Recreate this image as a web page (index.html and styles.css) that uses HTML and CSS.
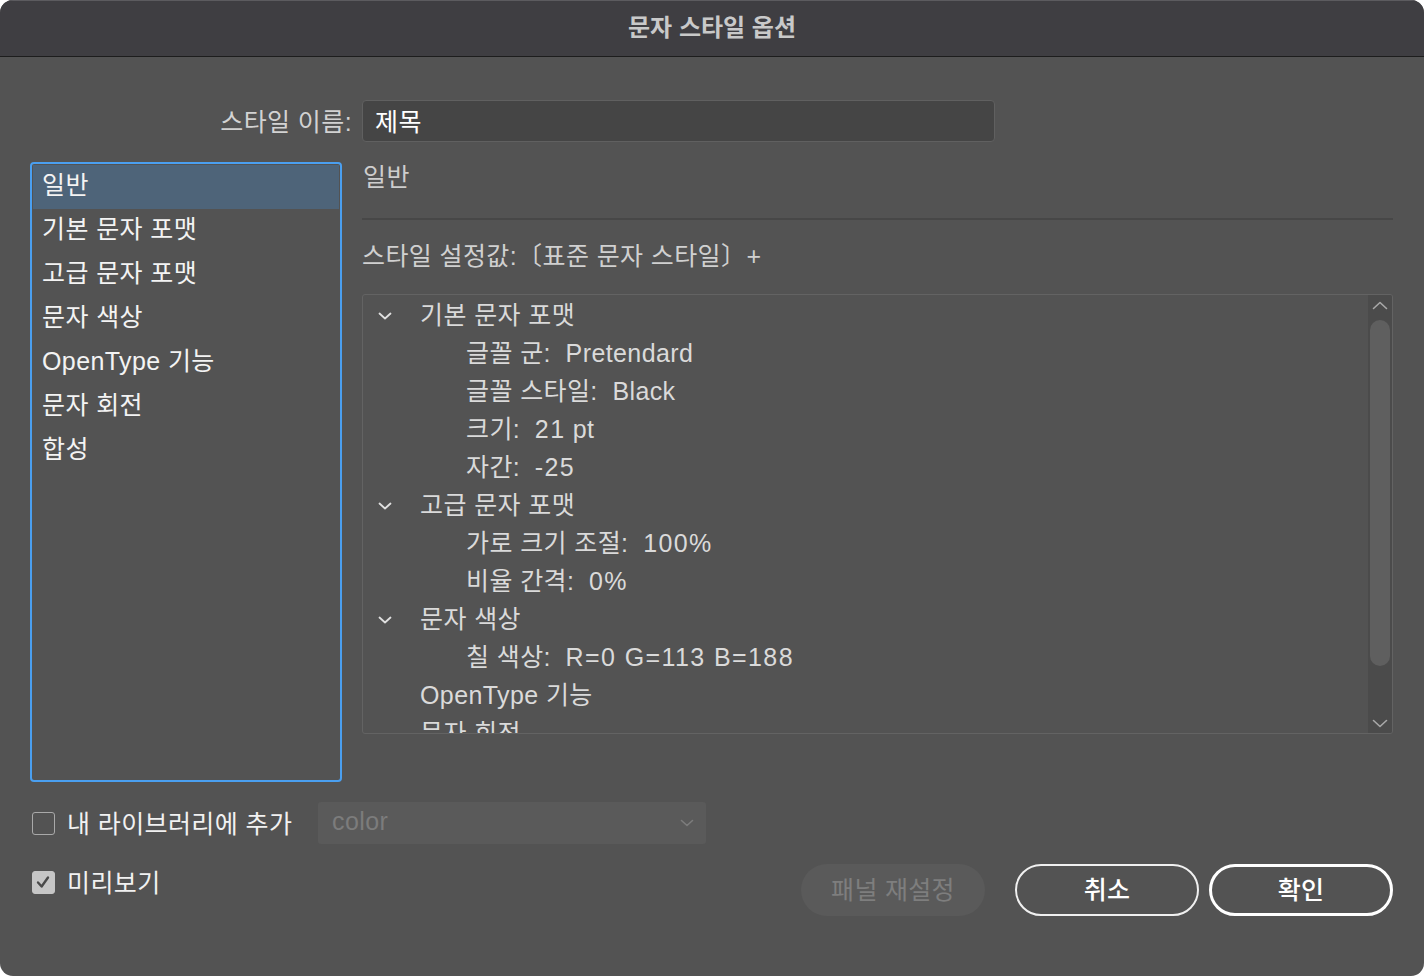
FILE: index.html
```html
<!DOCTYPE html>
<html lang="ko">
<head>
<meta charset="utf-8">
<title>문자 스타일 옵션</title>
<link rel="stylesheet" href="styles.css">
</head>
<body>
<div class="window">
  <div class="titlebar">문자 스타일 옵션</div>
  <div class="content">
    <div class="name-row">
      <label class="name-label">스타일 이름:</label>
      <div class="name-input">제목</div>
    </div>
    <div class="main">
      <ul class="side-list">
        <li class="selected">일반</li>
        <li>기본 문자 포맷</li>
        <li>고급 문자 포맷</li>
        <li>문자 색상</li>
        <li>OpenType 기능</li>
        <li>문자 회전</li>
        <li>합성</li>
      </ul>
      <div class="panel">
        <div class="panel-title">일반</div>
        <div class="separator"></div>
        <div class="based-on">스타일 설정값:〔표준 문자 스타일〕+</div>
        <div class="tree-box">
          <div class="tree">
            <div class="row l1"><svg class="chev" viewBox="0 0 14 8"><polyline points="1.5,1.5 7,6.5 12.5,1.5"/></svg><span class="txt">기본 문자 포맷</span></div>
            <div class="row l2"><span class="txt">글꼴 군:&nbsp; Pretendard</span></div>
            <div class="row l2"><span class="txt">글꼴 스타일:&nbsp; Black</span></div>
            <div class="row l2"><span class="txt">크기:&nbsp; <span class="num">21</span> pt</span></div>
            <div class="row l2"><span class="txt">자간:&nbsp; <span class="num">-25</span></span></div>
            <div class="row l1"><svg class="chev" viewBox="0 0 14 8"><polyline points="1.5,1.5 7,6.5 12.5,1.5"/></svg><span class="txt">고급 문자 포맷</span></div>
            <div class="row l2"><span class="txt">가로 크기 조절:&nbsp; <span class="num">100%</span></span></div>
            <div class="row l2"><span class="txt">비율 간격:&nbsp; <span class="num">0%</span></span></div>
            <div class="row l1"><svg class="chev" viewBox="0 0 14 8"><polyline points="1.5,1.5 7,6.5 12.5,1.5"/></svg><span class="txt">문자 색상</span></div>
            <div class="row l2"><span class="txt">칠 색상:&nbsp; <span class="num">R=0 G=113 B=188</span></span></div>
            <div class="row l1 nochev"><span class="txt">OpenType 기능</span></div>
            <div class="row l1 nochev"><span class="txt">문자 회전</span></div>
          </div>
          <div class="scrollbar">
            <svg class="sarrow" viewBox="0 0 16 9"><polyline points="1.5,7.5 8,1.5 14.5,7.5"/></svg>
            <div class="thumb"></div>
            <svg class="sarrow down" viewBox="0 0 16 9"><polyline points="1.5,1.5 8,7.5 14.5,1.5"/></svg>
          </div>
        </div>
      </div>
    </div>
    <div class="lib-row">
      <span class="checkbox"></span>
      <span class="cb-label lib-label">내 라이브러리에 추가</span>
      <div class="dropdown">
        <span>color</span>
        <svg class="dd-chev" viewBox="0 0 14 8"><polyline points="1.5,1.5 7,6.5 12.5,1.5"/></svg>
      </div>
    </div>
    <div class="bottom-row">
      <div class="preview">
        <span class="checkbox checked"><svg viewBox="0 0 22 22"><polyline points="5.5,11.5 9.5,16 16.5,6"/></svg></span>
        <span class="cb-label">미리보기</span>
      </div>
      <div class="buttons">
        <button class="btn disabled">패널 재설정</button>
        <button class="btn cancel">취소</button>
        <button class="btn ok">확인</button>
      </div>
    </div>
  </div>
</div>
</body>
</html>
```
FILE: styles.css
```css
* { box-sizing: border-box; }
html, body {
  margin: 0;
  padding: 0;
  background: #ffffff;
}
body {
  font-family: "Liberation Sans", "Noto Sans CJK KR", sans-serif;
  font-size: 25px;
  letter-spacing: 0.4px;
}
.window {
  width: 1424px;
  height: 976px;
  background: #535353;
  border-radius: 13px;
  overflow: hidden;
  display: flex;
  flex-direction: column;
}
.titlebar {
  height: 57px;
  flex: none;
  background: #3f3e42;
  border-top: 1px solid #5c5b5f;
  border-bottom: 1px solid #1d1d1d;
  color: #c9c9c9;
  font-family: "Noto Sans CJK KR", sans-serif;
  font-weight: 700;
  font-size: 24px;
  letter-spacing: 0;
  display: flex;
  align-items: center;
  justify-content: center;
  padding-bottom: 6px;
}
.content {
  flex: 1;
  padding: 43px 31px 0 30px;
  display: flex;
  flex-direction: column;
}
.name-row {
  display: flex;
  align-items: center;
  height: 42px;
}
.name-label {
  width: 322px;
  text-align: right;
  color: #d2d2d2;
  margin-right: 10px;
  padding-bottom: 2px;
}
.name-input {
  width: 633px;
  height: 42px;
  background: #454545;
  border: 1px solid #606060;
  border-radius: 4px;
  color: #ffffff;
  padding: 0 12px 2px;
  display: flex;
  align-items: center;
}
.main {
  display: flex;
  margin-top: 20px;
  gap: 20px;
}
.side-list {
  list-style: none;
  margin: 0;
  padding: 1px;
  width: 312px;
  height: 620px;
  border: 2px solid #4a9ff0;
  border-radius: 4px;
  flex: none;
}
.side-list li {
  height: 44px;
  line-height: 40px;
  padding-left: 9px;
  color: #f3f3f3;
}
.side-list li.selected {
  background: #4e6479;
}
.panel {
  flex: 1;
  display: flex;
  flex-direction: column;
}
.panel-title {
  color: #cdcdcd;
  height: 32px;
  line-height: 30px;
  padding-left: 1px;
}
.separator {
  height: 2px;
  background: #474747;
  margin-top: 24px;
}
.based-on {
  color: #d0d0d0;
  margin-top: 21px;
  height: 32px;
  line-height: 30px;
}
.tree-box {
  margin-top: 21px;
  height: 440px;
  border: 1px solid #636363;
  border-radius: 3px;
  display: flex;
  overflow: hidden;
}
.tree {
  flex: 1;
  overflow: hidden;
}
.row {
  height: 38px;
  display: flex;
  align-items: center;
  color: #dadada;
  white-space: nowrap;
  padding-top: 1px;
}
.row .txt {
  line-height: 32px;
}
.row .num {
  letter-spacing: 1.4px;
}
.row.l1 { padding-left: 15px; }
.row.l1.nochev { padding-left: 57px; }
.row.l2 { padding-left: 103px; }
.chev {
  width: 14px;
  height: 8px;
  margin-right: 28px;
  margin-top: 3px;
  fill: none;
  stroke: #e0e0e0;
  stroke-width: 1.8;
  stroke-linecap: round;
  stroke-linejoin: round;
  flex: none;
}
.scrollbar {
  width: 24px;
  flex: none;
  background: #4b4b4b;
  display: flex;
  flex-direction: column;
  align-items: center;
  padding: 6px 0 5px;
}
.sarrow {
  width: 16px;
  height: 9px;
  fill: none;
  stroke: #a8a8a8;
  stroke-width: 1.6;
  stroke-linecap: round;
  stroke-linejoin: round;
  flex: none;
}
.thumb {
  width: 20px;
  height: 346px;
  margin-top: 10px;
  background: #5f5f5f;
  border-radius: 10px;
  flex: none;
}
.sarrow.down {
  margin-top: auto;
}
.lib-row {
  display: flex;
  align-items: center;
  margin-top: 20px;
  height: 42px;
}
.checkbox {
  width: 23px;
  height: 23px;
  border: 1.5px solid #a9a9a9;
  border-radius: 3px;
  margin-left: 2px;
  margin-right: 12px;
  flex: none;
  display: inline-flex;
}
.checkbox.checked {
  background: #c6c6c6;
  border-color: #c6c6c6;
}
.checkbox.checked svg {
  width: 20px;
  height: 20px;
  fill: none;
  stroke: #4a4a4a;
  stroke-width: 2.6;
  stroke-linecap: round;
  stroke-linejoin: round;
}
.cb-label {
  color: #f1f1f1;
  padding-bottom: 3px;
}
.lib-label {
  width: 251px;
  flex: none;
  white-space: nowrap;
}
.dropdown {
  width: 388px;
  height: 42px;
  background: #5a5a5a;
  border-radius: 3px;
  display: flex;
  align-items: center;
  justify-content: space-between;
  padding: 0 12px 3px 14px;
  color: #7c7c7c;
}
.dd-chev {
  width: 14px;
  height: 8px;
  margin-top: 3px;
  fill: none;
  stroke: #7c7c7c;
  stroke-width: 1.6;
  stroke-linecap: round;
  stroke-linejoin: round;
}
.bottom-row {
  display: flex;
  align-items: center;
  justify-content: space-between;
  margin-top: 20px;
}
.preview {
  display: flex;
  align-items: center;
  margin-top: -16px;
}
.buttons {
  display: flex;
  align-items: center;
}
.btn {
  font-family: "Noto Sans CJK KR", sans-serif;
  font-size: 25px;
  letter-spacing: 0.3px;
  height: 52px;
  width: 184px;
  border-radius: 26px;
  background: transparent;
  color: #ffffff;
  font-weight: 500;
  padding: 0 0 4px;
}
.btn.disabled {
  background: #5a5a5a;
  border: none;
  color: #7e7e7e;
  font-weight: 400;
  margin-right: 30px;
}
.btn.cancel {
  border: 2px solid #f0f0f0;
  margin-right: 10px;
}
.btn.ok {
  border: 3.5px solid #ffffff;
}
```
